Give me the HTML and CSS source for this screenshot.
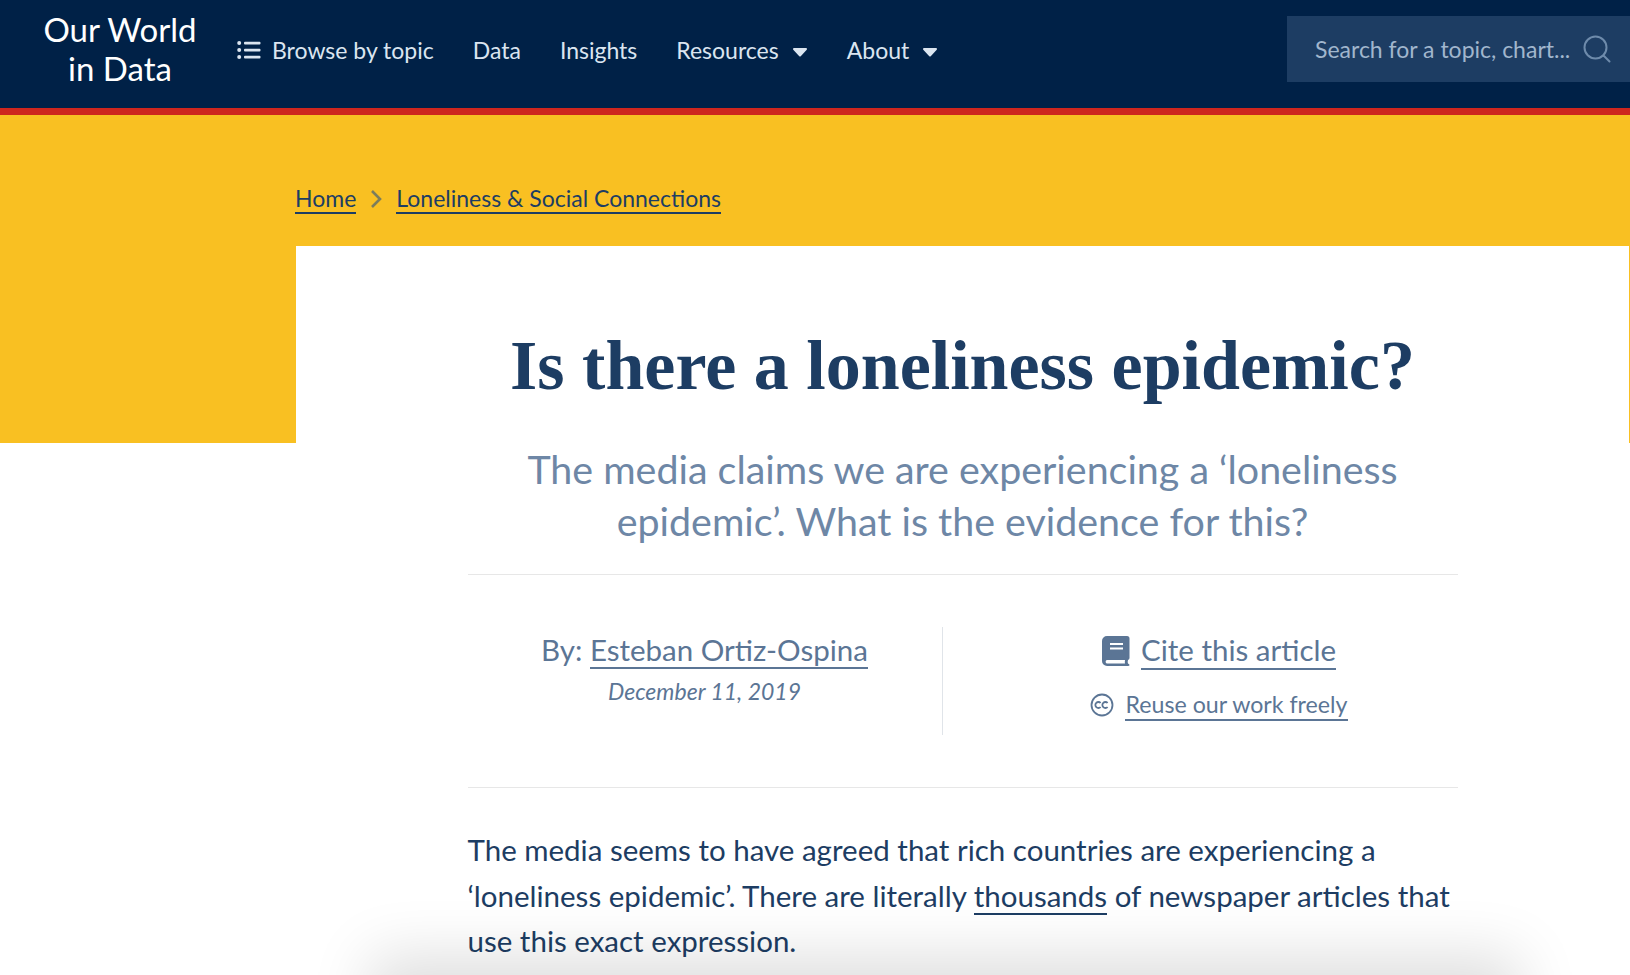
FILE: index.html
```html
<!DOCTYPE html>
<html lang="en">
<head>
  <meta charset="UTF-8" />
  <meta name="viewport" content="width=device-width, initial-scale=1.0"/>
  <title>Is there a loneliness epidemic?</title>
  <link rel="stylesheet" href="styles.css">
</head>
<body>
<header class="site-header">
  <a class="logo" href="#">Our World<br>in Data</a>
  <nav class="main-nav">
    <a class="nav-link nav-browse" href="#">
      <svg class="list-icon" viewBox="0 0 24 20" width="24" height="20" aria-hidden="true">
        <circle cx="2.2" cy="3" r="2"/><circle cx="2.2" cy="10" r="2"/><circle cx="2.2" cy="17" r="2"/>
        <rect x="7" y="1.8" width="16.5" height="2.6" rx="1"/><rect x="7" y="8.8" width="16.5" height="2.6" rx="1"/><rect x="7" y="15.8" width="16.5" height="2.6" rx="1"/>
      </svg>
      Browse by topic
    </a>
    <a class="nav-link" href="#">Data</a>
    <a class="nav-link" href="#">Insights</a>
    <a class="nav-link" href="#">Resources <svg class="caret" viewBox="0 0 16 10" width="16" height="10" aria-hidden="true"><path d="M2 2 H14 L8 8.5 Z"/></svg></a>
    <a class="nav-link" href="#">About <svg class="caret" viewBox="0 0 16 10" width="16" height="10" aria-hidden="true"><path d="M2 2 H14 L8 8.5 Z"/></svg></a>
  </nav>
  <div class="search-box">
    <span class="search-text">Search for a topic, chart...</span>
    <svg class="search-icon" viewBox="0 0 28 28" width="28" height="28" aria-hidden="true">
      <circle cx="12.5" cy="12.5" r="11"/><path d="M20.5 20.5 L26.5 26.5"/>
    </svg>
  </div>
</header>

<div class="hero">
  <div class="breadcrumb">
    <a href="#">Home</a>
    <svg class="crumb-sep" viewBox="0 0 12 18" width="12" height="18" aria-hidden="true"><path d="M2 1 L10 9 L2 17"/></svg>
    <a href="#">Loneliness &amp; Social Connections</a>
  </div>
</div>

<main class="article">
  <div class="article-col">
    <h1 class="title">Is there a loneliness epidemic?</h1>
    <p class="subtitle">The media claims we are experiencing a ‘loneliness epidemic’. What is the evidence for this?</p>
    <div class="byline-row">
      <div class="byline">
        <div class="by">By: <a href="#">Esteban Ortiz-Ospina</a></div>
        <div class="date">December 11, 2019</div>
      </div>
      <div class="tools">
        <div class="cite">
          <svg class="book-icon" viewBox="0 0 28 30" width="28" height="30" aria-hidden="true">
            <path d="M5 0 H25 A2.5 2.5 0 0 1 27.5 2.5 V22 Q27.5 23.5 26 24 Q25.3 26 26 27.5 Q27.5 28 27.5 29 Q27.5 30 26 30 H5 A5 5 0 0 1 0 25 V5 A5 5 0 0 1 5 0 Z"/>
            <rect class="book-cut" x="8" y="7" width="13" height="2"/>
            <rect class="book-cut" x="8" y="11.5" width="13" height="2"/>
            <path class="book-cut" d="M5 24 H23 Q22.6 26 23 27.5 H5 A1.8 1.8 0 0 1 5 24 Z"/>
          </svg>
          <a href="#">Cite this article</a>
        </div>
        <div class="reuse">
          <svg class="cc-icon" viewBox="0 0 24 24" width="24" height="24" aria-hidden="true">
            <circle cx="12" cy="12" r="10.5"/>
            <path d="M10.6 10 A3 3 0 1 0 10.6 14"/><path d="M17.6 10 A3 3 0 1 0 17.6 14"/>
          </svg>
          <a href="#">Reuse our work freely</a>
        </div>
      </div>
    </div>
    <p class="body-text">The media seems to have agreed that rich countries are experiencing a ‘loneliness epidemic’. There are literally <a href="#">thousands</a> of newspaper articles that use this exact expression.</p>
  </div>
</main>
<div class="bottom-shade"></div>
</body>
</html>
```

FILE: styles.css
```css
html, body {
  height: 975px;
  overflow: hidden;
}

body {
  font-family: 'Lato', sans-serif;
  margin: 0;
  padding: 0;
  background-color: #fff;
  position: relative;
}

a {
  color: inherit;
  text-decoration: none;
}

.site-header {
  display: flex;
  align-items: center;
  height: 108px;
  background-color: #002147;
  border-bottom: 7px solid #ce261e;
}

.logo {
  width: 156px;
  margin-left: 42px;
  margin-top: -11px;
  color: #fff;
  font-size: 33px;
  line-height: 39px;
  text-align: center;
}

.main-nav {
  display: flex;
  align-items: center;
  gap: 39px;
  margin-left: 39px;
  margin-top: -8px;
}

.nav-link {
  display: flex;
  align-items: center;
  color: #dbe5f0;
  font-size: 23px;
}

.list-icon {
  fill: #dbe5f0;
  margin-right: 11px;
}

.caret {
  margin-left: 13px;
  margin-top: 3px;
  fill: #dbe5f0;
  stroke: #dbe5f0;
  stroke-width: 2;
  stroke-linejoin: round;
}

.search-box {
  display: flex;
  align-items: center;
  margin-left: auto;
  margin-top: -10px;
  width: 343px;
  height: 66px;
  box-sizing: border-box;
  padding-left: 28px;
  background-color: #1d3d63;
}

.search-text {
  color: #a1b6cd;
  font-size: 23px;
}

.search-icon {
  margin-left: 13px;
  fill: none;
  stroke: #6e8bab;
  stroke-width: 2;
  stroke-linecap: round;
}

.hero {
  height: 328px;
  background-color: #f9c022;
  box-sizing: border-box;
  padding: 69px 0 0 295px;
}

.breadcrumb {
  display: flex;
  align-items: center;
  gap: 14px;
  color: #1d3d63;
  font-size: 23px;
}

.breadcrumb a {
  border-bottom: 2px solid #1d3d63;
  line-height: 28px;
}

.crumb-sep {
  fill: none;
  stroke: #7c7d5c;
  stroke-width: 2.6;
}

.article {
  margin: -197px 1px 0 296px;
  height: 729px;
  background-color: #fff;
}

.article-col {
  width: 990px;
  margin: 0 auto;
}

.title {
  margin: 0;
  padding-top: 80px;
  color: #1d3d63;
  font-family: 'Liberation Serif', serif;
  font-size: 70px;
  line-height: 80px;
  font-weight: 700;
  text-align: center;
}

.subtitle {
  margin: 37px 0 0;
  padding: 0 40px 27px;
  color: #6e87a6;
  font-size: 39.4px;
  line-height: 52px;
  text-align: center;
  border-bottom: 1px solid #e7e7e7;
}

.byline-row {
  display: flex;
  margin-top: 52px;
  padding-bottom: 52px;
  border-bottom: 1px solid #e7e7e7;
}

.byline {
  width: 474px;
  height: 108px;
  border-right: 1px solid #e0e4e9;
  color: #5b7595;
  text-align: center;
}

.by {
  font-size: 29.5px;
  line-height: 46px;
}

.by a, .cite a, .reuse a {
  border-bottom: 2px solid #5b7595;
}

.date {
  margin-top: 0;
  font-size: 23px;
  line-height: 36px;
  font-style: italic;
}

.tools {
  flex: 1;
  box-sizing: border-box;
  padding-left: 38px;
  color: #5b7595;
  display: flex;
  flex-direction: column;
  align-items: center;
}

.cite {
  display: flex;
  align-items: center;
  gap: 11px;
  font-size: 29.5px;
  line-height: 36px;
  margin-top: 5px;
}

.book-icon {
  fill: #5b7595;
}

.book-icon .book-cut {
  fill: #fff;
}

.reuse {
  display: flex;
  align-items: center;
  gap: 11px;
  margin-top: 19px;
  font-size: 23.2px;
  line-height: 30px;
}

.cc-icon {
  fill: none;
  stroke: #5b7595;
  stroke-width: 1.8;
}

.body-text {
  margin: 39px 0 0;
  color: #1d3d63;
  font-size: 29.5px;
  line-height: 45.5px;
}

.body-text a {
  border-bottom: 2px solid #1d3d63;
}

.bottom-shade {
  position: absolute;
  left: 0;
  right: 0;
  bottom: 0;
  height: 110px;
  overflow: hidden;
  pointer-events: none;
}

.bottom-shade::after {
  content: "";
  position: absolute;
  left: 400px;
  right: 140px;
  top: 120px;
  height: 40px;
  box-shadow: 0 0 60px 30px rgba(0, 0, 0, 0.13);
}
```
